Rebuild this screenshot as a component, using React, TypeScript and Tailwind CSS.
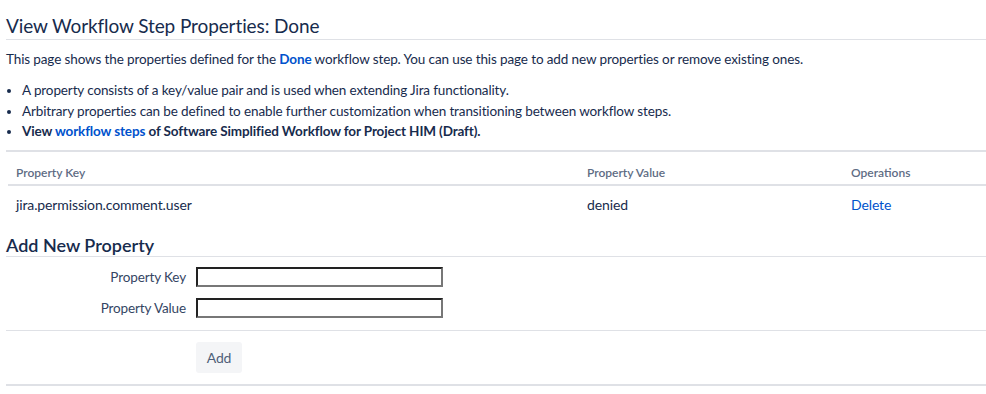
import React from 'react';

// Página de propriedades de um passo do workflow
const App: React.FC = () => {
  return (
    <div className="min-h-screen bg-white pl-[6px] text-[13.5px] tracking-[-0.12px] text-[#172b4d]" style={{ fontFamily: 'Lato, "Open Sans", sans-serif' }}>
      <h2 className="mt-[14px] border-b border-[#dfe1e6] pb-[1px] text-[19px] leading-6 font-normal tracking-[-0.1px]">
        View Workflow Step Properties: Done
      </h2>
      <p className="mt-[9px] leading-5">
        This page shows the properties defined for the <b className="font-bold text-[#0052cc]">Done</b> workflow step. You can use this page to add new properties or remove existing ones.
      </p>
      <ul className="mt-[11px] list-disc pl-[16px] leading-5">
        <li>A property consists of a key/value pair and is used when extending Jira functionality.</li>
        <li className="mt-[1px]">Arbitrary properties can be defined to enable further customization when transitioning between workflow steps.</li>
        <li className="font-bold">
          View <a className="text-[#0052cc]" href="#">workflow steps</a> of Software Simplified Workflow for Project HIM (Draft).
        </li>
      </ul>

      {/* tabela de propriedades */}
      <div className="mt-[9px] border-t-2 border-[#dfe1e6]">
        <div className="ml-[2px] grid grid-cols-[569px_264px_1fr] border-b-2 border-[#dfe1e6] pt-[13px] pb-[3px] text-[12px] leading-4 font-semibold tracking-normal text-[#5e6c84]">
          <div className="pl-[8px]">Property Key</div>
          <div className="pl-[10px]">Property Value</div>
          <div className="pl-[10px]">Operations</div>
        </div>
        <div className="ml-[2px] grid grid-cols-[569px_264px_1fr] pt-[9px] pb-[16px] text-[14px] leading-5">
          <div className="pl-[8px]">jira.permission.comment.user</div>
          <div className="pl-[10px]">denied</div>
          <div className="pl-[10px]"><a className="text-[#0052cc]" href="#">Delete</a></div>
        </div>
      </div>

      {/* formulário */}
      <h3 className="mt-[-1px] border-b border-[#dfe1e6] pt-[5px] text-[18px] leading-[21px] font-semibold tracking-normal">Add New Property</h3>
      <div className="mt-[10px] flex flex-col gap-[11px]">
        <div className="flex items-center">
          <label className="w-[190px] pr-[10px] text-right text-[#344563]">Property Key</label>
          <input className="h-[20px] w-[247px] border-2 border-t-[#222] border-l-[#222] border-b-[#777] border-r-[#777] bg-white" />
        </div>
        <div className="flex items-center">
          <label className="w-[190px] pr-[10px] text-right text-[#344563]">Property Value</label>
          <input className="h-[20px] w-[247px] border-2 border-t-[#222] border-l-[#222] border-b-[#777] border-r-[#777] bg-white" />
        </div>
      </div>
      <div className="mt-[11px] border-t border-[#dfe1e6] pt-[11px] pb-[11px] pl-[190px]">
        <button className="h-[31px] w-[46px] rounded-[3px] bg-[#f4f5f7] text-[14px] text-[#505f79]">Add</button>
      </div>
      <div className="border-t-2 border-[#dfe1e6]" />
    </div>
  );
};

export default App;
